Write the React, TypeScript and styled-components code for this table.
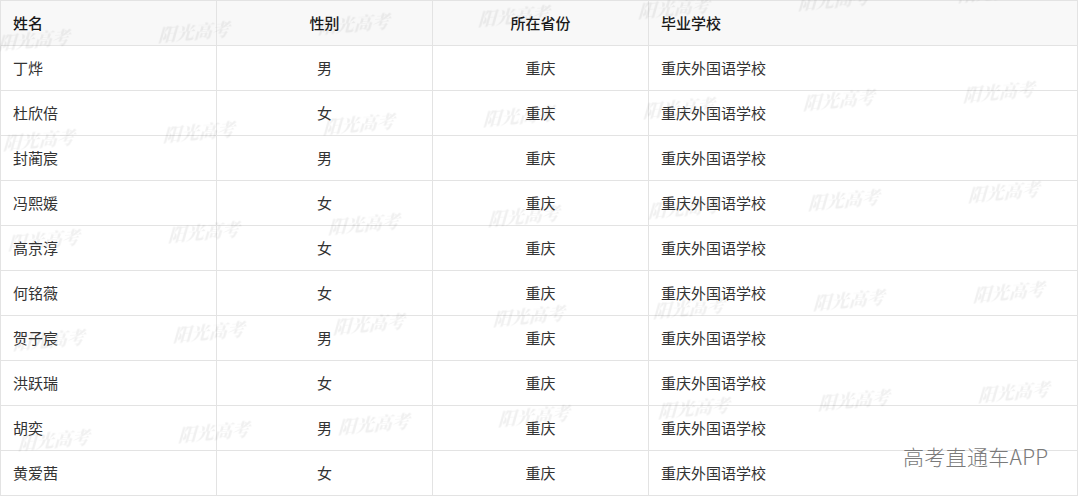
import styled, { createGlobalStyle } from "styled-components";

const GlobalStyle = createGlobalStyle`
  html, body {
    margin: 0;
    padding: 0;
    background: #ffffff;
  }
  body {
    font-family: "Noto Sans CJK SC", "Noto Sans", sans-serif;
  }
`;

const Page = styled.div`
  position: relative;
  width: 1080px;
  height: 497px;
  overflow: hidden;
  background: #ffffff;
`;

const Table = styled.table`
  width: 1078px;
  border-collapse: collapse;
  table-layout: fixed;
  border: 1px solid #e3e3e3;
`;

const HeadRow = styled.tr`
  background: #f8f8f8;
`;

const Cell = styled.td<{ $align?: "left" | "center" }>`
  height: 44px;
  padding: 0 12px;
  border: 1px solid #e3e3e3;
  font-size: 15px;
  line-height: 20px;
  color: #333333;
  text-align: ${(p) => p.$align || "left"};
  vertical-align: middle;
  white-space: nowrap;
`;

const HeadCell = styled(Cell).attrs({ as: "th" })`
  color: #1a1a1a;
  font-weight: 500;
`;

const Watermark = styled.span`
  position: absolute;
  font-family: "Noto Serif CJK SC", "Noto Sans CJK SC", serif;
  font-size: 18px;
  font-weight: 900;
  font-style: italic;
  color: rgba(0, 0, 0, 0.06);
  transform: rotate(-5deg) skewX(-8deg);
  filter: blur(0.4px);
  pointer-events: none;
  white-space: nowrap;
`;

const Brand = styled.span`
  position: absolute;
  left: 903px;
  top: 441px;
  font-family: "Noto Sans CJK SC", "Noto Sans", sans-serif;
  font-size: 21px;
  font-weight: 300;
  color: #7a7a7a;
  letter-spacing: 0.3px;
`;

type Student = { name: string; sex: string; province: string; school: string };

const students: Student[] = [
  { name: "丁烨", sex: "男", province: "重庆", school: "重庆外国语学校" },
  { name: "杜欣倍", sex: "女", province: "重庆", school: "重庆外国语学校" },
  { name: "封蔺宸", sex: "男", province: "重庆", school: "重庆外国语学校" },
  { name: "冯熙媛", sex: "女", province: "重庆", school: "重庆外国语学校" },
  { name: "高京淳", sex: "女", province: "重庆", school: "重庆外国语学校" },
  { name: "何铭薇", sex: "女", province: "重庆", school: "重庆外国语学校" },
  { name: "贺子宸", sex: "男", province: "重庆", school: "重庆外国语学校" },
  { name: "洪跃瑞", sex: "女", province: "重庆", school: "重庆外国语学校" },
  { name: "胡奕", sex: "男", province: "重庆", school: "重庆外国语学校" },
  { name: "黄爱茜", sex: "女", province: "重庆", school: "重庆外国语学校" },
];

// watermark grid: 5 bands, 7 per band, drifting up to the right
const marks: { x: number; y: number }[] = [];
for (let r = 0; r < 5; r++) {
  for (let c = 0; c < 7; c++) {
    marks.push({ x: c * 160 - 2 + r * 5, y: 26 + r * 100 - c * 8 });
  }
}

export default function App() {
  return (
    <Page>
      <GlobalStyle />
      <Table>
        <colgroup>
          <col style={{ width: 216 }} />
          <col style={{ width: 216 }} />
          <col style={{ width: 216 }} />
          <col />
        </colgroup>
        <thead>
          <HeadRow>
            <HeadCell>姓名</HeadCell>
            <HeadCell $align="center">性别</HeadCell>
            <HeadCell $align="center">所在省份</HeadCell>
            <HeadCell>毕业学校</HeadCell>
          </HeadRow>
        </thead>
        <tbody>
          {students.map((s) => (
            <tr key={s.name}>
              <Cell>{s.name}</Cell>
              <Cell $align="center">{s.sex}</Cell>
              <Cell $align="center">{s.province}</Cell>
              <Cell>{s.school}</Cell>
            </tr>
          ))}
        </tbody>
      </Table>
      {marks.map((m, i) => (
        <Watermark key={i} style={{ left: m.x, top: m.y }}>
          阳光高考
        </Watermark>
      ))}
      <Brand>高考直通车APP</Brand>
    </Page>
  );
}
